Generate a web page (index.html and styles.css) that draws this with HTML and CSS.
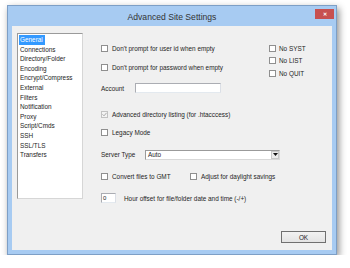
FILE: index.html
```html
<!DOCTYPE html>
<html>
<head>
<meta charset="utf-8">
<link rel="stylesheet" href="styles.css">
</head>
<body>
<div class="window">
  <div class="titlebar">
    <span class="title">Advanced Site Settings</span>
    <span class="close">&#x2715;</span>
  </div>
  <div class="client">
    <ul class="listbox">
      <li><span class="sel">General</span></li>
      <li>Connections</li>
      <li>Directory/Folder</li>
      <li>Encoding</li>
      <li>Encrypt/Compress</li>
      <li>External</li>
      <li>Filters</li>
      <li>Notification</li>
      <li>Proxy</li>
      <li>Script/Cmds</li>
      <li>SSH</li>
      <li>SSL/TLS</li>
      <li>Transfers</li>
    </ul>
    <div class="panel">
      <div class="top">
        <div class="leftcol">
          <div class="row"><span class="cb"></span>Don't prompt for user id when empty</div>
          <div class="row r2"><span class="cb"></span>Don't prompt for password when empty</div>
        </div>
        <div class="rightcol">
          <div class="row"><span class="cb cb-s"></span>No SYST</div>
          <div class="row"><span class="cb cb-s"></span>No LIST</div>
          <div class="row"><span class="cb cb-s"></span>No QUIT</div>
        </div>
      </div>
      <div class="row account"><span class="label-acc">Account</span><span class="input acc-input"></span></div>
      <div class="row adv"><span class="cb cb-dis"><svg width="5" height="5" viewBox="0 0 5 5"><path d="M0.5 2.3 L2 3.8 L4.6 0.8" fill="none" stroke="#a8a8a8" stroke-width="1"/></svg></span>Advanced directory listing (for .htacccess)</div>
      <div class="row legacy"><span class="cb"></span>Legacy Mode</div>
      <div class="row server"><span class="label-srv">Server Type</span><span class="select"><span class="sel-text">Auto</span><span class="arrow"><svg width="5" height="3" viewBox="0 0 5 3"><path d="M0 0 H5 L2.5 3 Z" fill="#111"/></svg></span></span></div>
      <div class="row convert"><span class="gmt"><span class="cb"></span>Convert files to GMT</span><span class="cb"></span>Adjust for daylight savings</div>
      <div class="row hour"><span class="input hour-input">0</span><span class="hour-text">Hour offset for file/folder date and time (-/+)</span></div>
      <div class="buttons"><span class="btn">OK</span></div>
    </div>
  </div>
</div>
</body>
</html>
```
FILE: styles.css
```css
html, body {
  margin: 0;
  padding: 0;
  background: #ffffff;
}
body {
  font-family: "Liberation Sans", Arial, sans-serif;
  font-size: 6.4px;
  color: #1e1e1e;
}
.window {
  box-sizing: border-box;
  margin: 5px 0 0 7px;
  width: 330px;
  height: 250px;
  background: #a7cbf2;
  border: 1px solid #7d9fc6;
  padding: 0 4px 4px 4px;
  box-shadow: 2px 3px 7px rgba(0, 0, 0, 0.45);
  display: flex;
  flex-direction: column;
}
.titlebar {
  height: 20px;
  position: relative;
  display: flex;
  align-items: center;
  justify-content: center;
}
.title {
  font-size: 8.6px;
  color: #333;
  margin-top: 1px;
}
.close {
  position: absolute;
  top: 3px;
  right: -2px;
  width: 19px;
  height: 10px;
  background: #c75050;
  color: #fff;
  font-size: 5px;
  font-weight: bold;
  display: flex;
  align-items: center;
  justify-content: center;
}
.client {
  flex: 1;
  background: #f0f0f0;
  display: flex;
}
.listbox {
  box-sizing: border-box;
  list-style: none;
  margin: 7px 0 0 5px;
  padding: 1px 0 0 1px;
  width: 66px;
  height: 166px;
  background: #fff;
  border: 1px solid #9a9a9a;
  border-right-color: #d6d6d6;
  border-bottom-color: #d6d6d6;
  flex: none;
}
.listbox li {
  line-height: 9.6px;
  height: 9.6px;
  padding-left: 1px;
  white-space: nowrap;
}
.listbox .sel {
  background: #3399ff;
  color: #fff;
  display: inline-block;
  margin-left: -1px;
  padding: 0 2px 0 1px;
}
.panel {
  flex: 1;
  margin-left: 18px;
  padding-top: 17px;
  display: flex;
  flex-direction: column;
}
.row {
  height: 10px;
  display: flex;
  align-items: center;
  white-space: nowrap;
}
.top {
  display: flex;
}
.leftcol {
  width: 168px;
  display: flex;
  flex-direction: column;
  gap: 9px;
}
.rightcol {
  display: flex;
  flex-direction: column;
  gap: 2.5px;
}
.cb {
  box-sizing: border-box;
  width: 7px;
  height: 7px;
  border: 1px solid #8f8f8f;
  background: #fff;
  margin-right: 4px;
  flex: none;
  display: inline-flex;
  align-items: center;
  justify-content: center;
}
.cb-s {
  margin-right: 3px;
}
.cb-dis {
  border-color: #c2c2c2;
  background: #f4f4f4;
}
.account {
  margin-top: -30px;
}
.top + .account {
  margin-top: 5px;
}
.label-acc {
  width: 34px;
}
.input {
  box-sizing: border-box;
  background: #fff;
  border: 1px solid #abadb3;
  border-bottom-color: #e3e9ef;
  border-right-color: #dbdfe6;
}
.acc-input {
  width: 86px;
  height: 10px;
}
.adv {
  margin-top: 16px;
}
.legacy {
  margin-top: 8px;
}
.server {
  margin-top: 12.5px;
}
.label-srv {
  width: 44px;
}
.select {
  box-sizing: border-box;
  width: 135px;
  height: 10px;
  background: #fff;
  border: 1px solid #9a9a9a;
  border-right-color: #d8d8d8;
  border-bottom-color: #d8d8d8;
  display: flex;
  align-items: center;
  justify-content: space-between;
}
.sel-text {
  padding-left: 2px;
}
.arrow {
  box-sizing: border-box;
  width: 8px;
  height: 8px;
  background: #ececec;
  border: 1px solid #c8c8c8;
  margin-right: 0;
  display: flex;
  align-items: center;
  justify-content: center;
}
.convert {
  margin-top: 11.5px;
}
.gmt {
  width: 89px;
  display: flex;
  align-items: center;
}
.hour {
  margin-top: 12px;
}
.hour-input {
  width: 15px;
  height: 10px;
  font-size: 6px;
  line-height: 8px;
  padding-left: 1px;
}
.hour-text {
  margin-left: 8px;
}
.buttons {
  display: flex;
  justify-content: flex-end;
  padding-right: 6px;
  margin-top: 28px;
}
.btn {
  box-sizing: border-box;
  width: 45px;
  height: 12px;
  border: 1px solid #707070;
  background: linear-gradient(#f2f2f2, #e3e3e3);
  display: flex;
  align-items: center;
  justify-content: center;
  font-size: 6.4px;
}
```
